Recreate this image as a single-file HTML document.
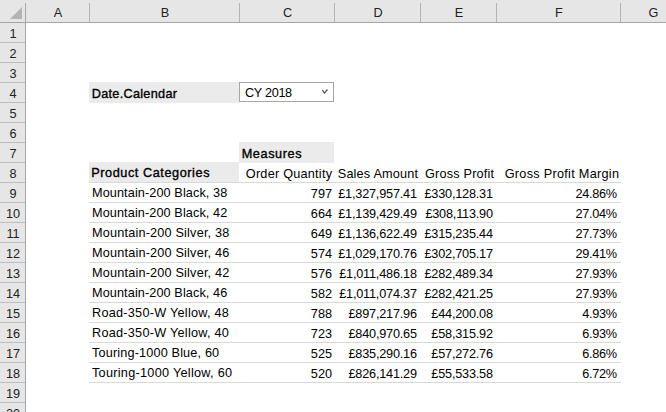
<!DOCTYPE html>
<html><head><meta charset="utf-8"><style>
html,body{margin:0;padding:0;width:666px;height:412px;overflow:hidden;background:#fff;position:relative}
div{position:absolute}
.t,.h,.r{font-family:"Liberation Sans",sans-serif;font-size:12.7px;white-space:nowrap;line-height:20px;height:20px}
.h{line-height:22px;height:22px}
</style></head><body>
<div style="left:0px;top:0px;width:666px;height:22px;background:#e6e6e6;"></div>
<div style="left:0px;top:22px;width:666px;height:1px;background:#a6a6a6;"></div>
<div style="left:0px;top:23px;width:25px;height:389px;background:#e6e6e6;"></div>
<div style="left:25px;top:3px;width:1px;height:409px;background:#a6a6a6;"></div>
<svg style="position:absolute;left:0;top:0" width="25" height="22"><polygon points="22,7 22,19 10,19" fill="#b4b4b4"/></svg>
<div style="left:89px;top:3px;width:1px;height:19px;background:#b4b4b4;"></div>
<div style="left:239px;top:3px;width:1px;height:19px;background:#b4b4b4;"></div>
<div style="left:334px;top:3px;width:1px;height:19px;background:#b4b4b4;"></div>
<div style="left:420px;top:3px;width:1px;height:19px;background:#b4b4b4;"></div>
<div style="left:496px;top:3px;width:1px;height:19px;background:#b4b4b4;"></div>
<div style="left:620px;top:3px;width:1px;height:19px;background:#b4b4b4;"></div>
<div style="left:0px;top:42px;width:25px;height:1px;background:#bdbdbd;"></div>
<div style="left:0px;top:62px;width:25px;height:1px;background:#bdbdbd;"></div>
<div style="left:0px;top:82px;width:25px;height:1px;background:#bdbdbd;"></div>
<div style="left:0px;top:102px;width:25px;height:1px;background:#bdbdbd;"></div>
<div style="left:0px;top:122px;width:25px;height:1px;background:#bdbdbd;"></div>
<div style="left:0px;top:142px;width:25px;height:1px;background:#bdbdbd;"></div>
<div style="left:0px;top:162px;width:25px;height:1px;background:#bdbdbd;"></div>
<div style="left:0px;top:182px;width:25px;height:1px;background:#bdbdbd;"></div>
<div style="left:0px;top:202px;width:25px;height:1px;background:#bdbdbd;"></div>
<div style="left:0px;top:222px;width:25px;height:1px;background:#bdbdbd;"></div>
<div style="left:0px;top:242px;width:25px;height:1px;background:#bdbdbd;"></div>
<div style="left:0px;top:262px;width:25px;height:1px;background:#bdbdbd;"></div>
<div style="left:0px;top:282px;width:25px;height:1px;background:#bdbdbd;"></div>
<div style="left:0px;top:302px;width:25px;height:1px;background:#bdbdbd;"></div>
<div style="left:0px;top:322px;width:25px;height:1px;background:#bdbdbd;"></div>
<div style="left:0px;top:342px;width:25px;height:1px;background:#bdbdbd;"></div>
<div style="left:0px;top:362px;width:25px;height:1px;background:#bdbdbd;"></div>
<div style="left:0px;top:382px;width:25px;height:1px;background:#bdbdbd;"></div>
<div style="left:0px;top:402px;width:25px;height:1px;background:#bdbdbd;"></div>
<div class="h" style="top:2px;left:8.00px;width:100px;text-align:center;color:#222;">A</div>
<div class="h" style="top:2px;left:115.00px;width:100px;text-align:center;color:#222;">B</div>
<div class="h" style="top:2px;left:237.50px;width:100px;text-align:center;color:#222;">C</div>
<div class="h" style="top:2px;left:328.00px;width:100px;text-align:center;color:#222;">D</div>
<div class="h" style="top:2px;left:409.00px;width:100px;text-align:center;color:#222;">E</div>
<div class="h" style="top:2px;left:509.00px;width:100px;text-align:center;color:#222;">F</div>
<div class="h" style="top:2px;left:603.50px;width:100px;text-align:center;color:#222;">G</div>
<div class="r" style="top:24px;left:-37.00px;width:100px;text-align:center;color:#222;">1</div>
<div class="r" style="top:44px;left:-37.00px;width:100px;text-align:center;color:#222;">2</div>
<div class="r" style="top:64px;left:-37.00px;width:100px;text-align:center;color:#222;">3</div>
<div class="r" style="top:84px;left:-37.00px;width:100px;text-align:center;color:#222;">4</div>
<div class="r" style="top:104px;left:-37.00px;width:100px;text-align:center;color:#222;">5</div>
<div class="r" style="top:124px;left:-37.00px;width:100px;text-align:center;color:#222;">6</div>
<div class="r" style="top:144px;left:-37.00px;width:100px;text-align:center;color:#222;">7</div>
<div class="r" style="top:164px;left:-37.00px;width:100px;text-align:center;color:#222;">8</div>
<div class="r" style="top:184px;left:-37.00px;width:100px;text-align:center;color:#222;">9</div>
<div class="r" style="top:204px;left:-37.00px;width:100px;text-align:center;color:#222;">10</div>
<div class="r" style="top:224px;left:-37.00px;width:100px;text-align:center;color:#222;">11</div>
<div class="r" style="top:244px;left:-37.00px;width:100px;text-align:center;color:#222;">12</div>
<div class="r" style="top:264px;left:-37.00px;width:100px;text-align:center;color:#222;">13</div>
<div class="r" style="top:284px;left:-37.00px;width:100px;text-align:center;color:#222;">14</div>
<div class="r" style="top:304px;left:-37.00px;width:100px;text-align:center;color:#222;">15</div>
<div class="r" style="top:324px;left:-37.00px;width:100px;text-align:center;color:#222;">16</div>
<div class="r" style="top:344px;left:-37.00px;width:100px;text-align:center;color:#222;">17</div>
<div class="r" style="top:364px;left:-37.00px;width:100px;text-align:center;color:#222;">18</div>
<div class="r" style="top:384px;left:-37.00px;width:100px;text-align:center;color:#222;">19</div>
<div class="r" style="top:404px;left:-37.00px;width:100px;text-align:center;color:#222;">20</div>
<div style="left:89px;top:82px;width:150px;height:21px;background:#ebebeb;"></div>
<div style="left:89px;top:162px;width:150px;height:21px;background:#ebebeb;"></div>
<div style="left:239px;top:142px;width:95px;height:21px;background:#ebebeb;"></div>
<div style="left:239px;top:82px;width:95px;height:20px;background:#fff;box-sizing:border-box;border:1px solid #a6a6a6;"></div>
<svg style="position:absolute;left:321px;top:88px" width="8" height="6"><polyline points="1.2,2.0 3.4,5.1 6.5,1.5" fill="none" stroke="#505050" stroke-width="1.2"/></svg>
<div class="t" style="top:84px;letter-spacing:0.290px;left:91.7px;-webkit-text-stroke:0.35px #000;">Date.Calendar</div>
<div class="t" style="top:83px;letter-spacing:-0.330px;left:245px;">CY 2018</div>
<div class="t" style="top:144px;letter-spacing:0.600px;left:241.7px;-webkit-text-stroke:0.35px #000;">Measures</div>
<div class="t" style="top:163px;letter-spacing:0.570px;left:91.2px;-webkit-text-stroke:0.35px #000;">Product Categories</div>
<div class="t" style="top:164px;letter-spacing:0.230px;right:333.770px;text-align:right;">Order Quantity</div>
<div class="t" style="top:164px;letter-spacing:0.180px;right:247.820px;text-align:right;">Sales Amount</div>
<div class="t" style="top:164px;letter-spacing:0.180px;right:171.820px;text-align:right;">Gross Profit</div>
<div class="t" style="top:164px;letter-spacing:0.280px;right:46.720px;text-align:right;">Gross Profit Margin</div>
<div style="left:89px;top:182px;width:532px;height:1px;background:#d9d9d9;"></div>
<div style="left:89px;top:202px;width:532px;height:1px;background:#d9d9d9;"></div>
<div style="left:89px;top:222px;width:532px;height:1px;background:#d9d9d9;"></div>
<div style="left:89px;top:242px;width:532px;height:1px;background:#d9d9d9;"></div>
<div style="left:89px;top:262px;width:532px;height:1px;background:#d9d9d9;"></div>
<div style="left:89px;top:282px;width:532px;height:1px;background:#d9d9d9;"></div>
<div style="left:89px;top:302px;width:532px;height:1px;background:#d9d9d9;"></div>
<div style="left:89px;top:322px;width:532px;height:1px;background:#d9d9d9;"></div>
<div style="left:89px;top:342px;width:532px;height:1px;background:#d9d9d9;"></div>
<div style="left:89px;top:362px;width:532px;height:1px;background:#d9d9d9;"></div>
<div style="left:89px;top:382px;width:532px;height:1px;background:#d9d9d9;"></div>
<div class="t" style="top:183px;letter-spacing:0.095px;left:92px;">Mountain-200 Black, 38</div>
<div class="t" style="top:184px;right:334.000px;text-align:right;">797</div>
<div class="t" style="top:184px;letter-spacing:-0.200px;right:249.200px;text-align:right;">£1,327,957.41</div>
<div class="t" style="top:184px;letter-spacing:-0.200px;right:173.200px;text-align:right;">£330,128.31</div>
<div class="t" style="top:184px;letter-spacing:-0.300px;right:49.300px;text-align:right;">24.86%</div>
<div class="t" style="top:203px;letter-spacing:0.095px;left:92px;">Mountain-200 Black, 42</div>
<div class="t" style="top:204px;right:334.000px;text-align:right;">664</div>
<div class="t" style="top:204px;letter-spacing:-0.200px;right:249.200px;text-align:right;">£1,139,429.49</div>
<div class="t" style="top:204px;letter-spacing:-0.200px;right:173.200px;text-align:right;">£308,113.90</div>
<div class="t" style="top:204px;letter-spacing:-0.300px;right:49.300px;text-align:right;">27.04%</div>
<div class="t" style="top:223px;letter-spacing:0.182px;left:92px;">Mountain-200 Silver, 38</div>
<div class="t" style="top:224px;right:334.000px;text-align:right;">649</div>
<div class="t" style="top:224px;letter-spacing:-0.200px;right:249.200px;text-align:right;">£1,136,622.49</div>
<div class="t" style="top:224px;letter-spacing:-0.200px;right:173.200px;text-align:right;">£315,235.44</div>
<div class="t" style="top:224px;letter-spacing:-0.300px;right:49.300px;text-align:right;">27.73%</div>
<div class="t" style="top:243px;letter-spacing:0.182px;left:92px;">Mountain-200 Silver, 46</div>
<div class="t" style="top:244px;right:334.000px;text-align:right;">574</div>
<div class="t" style="top:244px;letter-spacing:-0.200px;right:249.200px;text-align:right;">£1,029,170.76</div>
<div class="t" style="top:244px;letter-spacing:-0.200px;right:173.200px;text-align:right;">£302,705.17</div>
<div class="t" style="top:244px;letter-spacing:-0.300px;right:49.300px;text-align:right;">29.41%</div>
<div class="t" style="top:263px;letter-spacing:0.182px;left:92px;">Mountain-200 Silver, 42</div>
<div class="t" style="top:264px;right:334.000px;text-align:right;">576</div>
<div class="t" style="top:264px;letter-spacing:-0.200px;right:249.200px;text-align:right;">£1,011,486.18</div>
<div class="t" style="top:264px;letter-spacing:-0.200px;right:173.200px;text-align:right;">£282,489.34</div>
<div class="t" style="top:264px;letter-spacing:-0.300px;right:49.300px;text-align:right;">27.93%</div>
<div class="t" style="top:283px;letter-spacing:0.095px;left:92px;">Mountain-200 Black, 46</div>
<div class="t" style="top:284px;right:334.000px;text-align:right;">582</div>
<div class="t" style="top:284px;letter-spacing:-0.200px;right:249.200px;text-align:right;">£1,011,074.37</div>
<div class="t" style="top:284px;letter-spacing:-0.200px;right:173.200px;text-align:right;">£282,421.25</div>
<div class="t" style="top:284px;letter-spacing:-0.300px;right:49.300px;text-align:right;">27.93%</div>
<div class="t" style="top:303px;letter-spacing:0.250px;left:92px;">Road-350-W Yellow, 48</div>
<div class="t" style="top:304px;right:334.000px;text-align:right;">788</div>
<div class="t" style="top:304px;letter-spacing:-0.200px;right:249.200px;text-align:right;">£897,217.96</div>
<div class="t" style="top:304px;letter-spacing:-0.200px;right:173.200px;text-align:right;">£44,200.08</div>
<div class="t" style="top:304px;letter-spacing:-0.300px;right:49.300px;text-align:right;">4.93%</div>
<div class="t" style="top:323px;letter-spacing:0.250px;left:92px;">Road-350-W Yellow, 40</div>
<div class="t" style="top:324px;right:334.000px;text-align:right;">723</div>
<div class="t" style="top:324px;letter-spacing:-0.200px;right:249.200px;text-align:right;">£840,970.65</div>
<div class="t" style="top:324px;letter-spacing:-0.200px;right:173.200px;text-align:right;">£58,315.92</div>
<div class="t" style="top:324px;letter-spacing:-0.300px;right:49.300px;text-align:right;">6.93%</div>
<div class="t" style="top:343px;letter-spacing:0.150px;left:92px;">Touring-1000 Blue, 60</div>
<div class="t" style="top:344px;right:334.000px;text-align:right;">525</div>
<div class="t" style="top:344px;letter-spacing:-0.200px;right:249.200px;text-align:right;">£835,290.16</div>
<div class="t" style="top:344px;letter-spacing:-0.200px;right:173.200px;text-align:right;">£57,272.76</div>
<div class="t" style="top:344px;letter-spacing:-0.300px;right:49.300px;text-align:right;">6.86%</div>
<div class="t" style="top:363px;letter-spacing:0.273px;left:92px;">Touring-1000 Yellow, 60</div>
<div class="t" style="top:364px;right:334.000px;text-align:right;">520</div>
<div class="t" style="top:364px;letter-spacing:-0.200px;right:249.200px;text-align:right;">£826,141.29</div>
<div class="t" style="top:364px;letter-spacing:-0.200px;right:173.200px;text-align:right;">£55,533.58</div>
<div class="t" style="top:364px;letter-spacing:-0.300px;right:49.300px;text-align:right;">6.72%</div>
</body></html>
